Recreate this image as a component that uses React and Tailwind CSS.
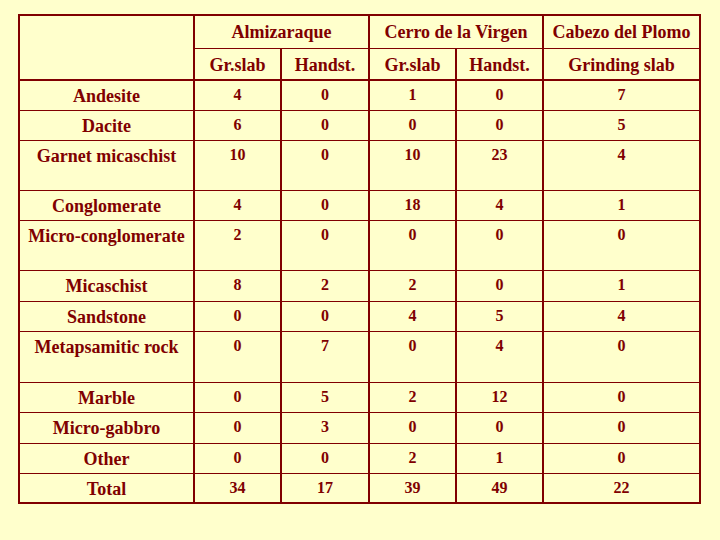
import React from "react";

const rows = [
  ["Andesite", 4, 0, 1, 0, 7],
  ["Dacite", 6, 0, 0, 0, 5],
  ["Garnet micaschist", 10, 0, 10, 23, 4],
  ["Conglomerate", 4, 0, 18, 4, 1],
  ["Micro-conglomerate", 2, 0, 0, 0, 0],
  ["Micaschist", 8, 2, 2, 0, 1],
  ["Sandstone", 0, 0, 4, 5, 4],
  ["Metapsamitic rock", 0, 7, 0, 4, 0],
  ["Marble", 0, 5, 2, 12, 0],
  ["Micro-gabbro", 0, 3, 0, 0, 0],
  ["Other", 0, 0, 2, 1, 0],
  ["Total", 34, 17, 39, 49, 22],
];

export default function App() {
  return (
    <div
      className="w-[720px] h-[540px] bg-[#ffffcc] pl-[18px] pt-[14px] text-[#800000] font-bold"
      style={{ fontFamily: '"Liberation Serif", "Times New Roman", serif' }}
    >
      <div className="w-[683px] h-[490px] border-2 border-[#800000] grid grid-cols-[175px_87px_88px_87px_87px_155px] grid-rows-[33px_32px_30px_30px_50px_30px_50px_31px_30px_51px_30px_31px_30px_28px]">
        <div className="row-span-2 border-r-2 border-b-2 border-[#800000]" />
        <div className="col-span-2 border-r-2 border-b border-[#800000] flex items-center justify-center text-[18px] leading-[21px]">
          Almizaraque
        </div>
        <div className="col-span-2 border-r-2 border-b border-[#800000] flex items-center justify-center text-[18px] leading-[21px]">
          Cerro de la Virgen
        </div>
        <div className="border-b border-[#800000] flex items-center justify-center text-[18px] leading-[21px]">
          Cabezo del Plomo
        </div>
        {["Gr.slab", "Handst.", "Gr.slab", "Handst."].map((h, i) => (
          <div
            key={i}
            className="border-r-2 border-b-2 border-[#800000] text-center pt-[6px] text-[18px] leading-[21px]"
          >
            {h}
          </div>
        ))}
        <div className="border-b-2 border-[#800000] text-center pt-[6px] text-[18px] leading-[21px]">
          Grinding slab
        </div>
        {rows.map((r, ri) => {
          const last = ri === rows.length - 1;
          return (
            <React.Fragment key={ri}>
              <div
                className={
                  "border-r-2 border-[#800000] text-center pt-[4px] text-[18px] leading-[22px] whitespace-nowrap " +
                  (last ? "" : "border-b")
                }
              >
                {r[0]}
              </div>
              {r.slice(1).map((v, ci) => (
                <div
                  key={ci}
                  className={
                    "border-[#800000] text-center pt-[5px] text-[16px] leading-[18px] " +
                    (ci < 4 ? "border-r-2 " : "") +
                    (last ? "" : "border-b")
                  }
                >
                  {v}
                </div>
              ))}
            </React.Fragment>
          );
        })}
      </div>
    </div>
  );
}
